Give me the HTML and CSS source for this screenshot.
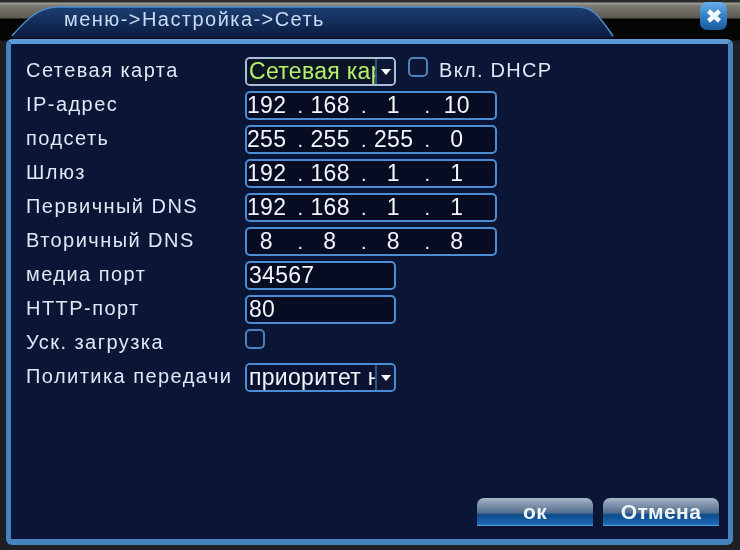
FILE: index.html
```html
<!DOCTYPE html>
<html lang="ru">
<head>
<meta charset="utf-8">
<title>Сеть</title>
<link rel="stylesheet" href="styles.css">
</head>
<body>
<div class="window">
  <header class="titlebar">
    <svg class="tab" width="740" height="40" viewBox="0 0 740 40" aria-hidden="true">
      <defs>
        <linearGradient id="tabfill" x1="0" y1="0" x2="0" y2="1">
          <stop offset="0" stop-color="#1c3f74"/>
          <stop offset="1" stop-color="#0a1a3e"/>
        </linearGradient>
      </defs>
      <path d="M12 38 C26 20 38 7 58 7 L578 7 C592 7 598 14 613 36 L613 38 Z" fill="url(#tabfill)"/>
      <path d="M12 36 C26 20 38 7 58 7 L578 7 C592 7 598 14 613 36" fill="none" stroke="#4f8fcc" stroke-width="1.5"/>
    </svg>
    <h1 class="title">меню-&gt;Настройка-&gt;Сеть</h1>
    <button class="close" type="button" aria-label="Закрыть">
      <svg width="20" height="20" viewBox="0 0 20 20" aria-hidden="true"><path d="M4.5 5 L15.5 15 M15.5 5 L4.5 15" stroke="#f4f8fc" stroke-width="4.5"/></svg>
    </button>
  </header>
  <main class="panel">
    <div class="form">
      <div class="row">
        <span class="label">Сетевая карта</span>
        <div class="field short select selected"><span class="value green">Сетевая карта</span><span class="arrow"></span></div>
        <span class="checkbox dhcp-box"></span>
        <span class="label dhcp">Вкл. DHCP</span>
      </div>
      <div class="row">
        <span class="label">IP-адрес</span>
        <div class="field ip"><span class="oct">192</span><span class="dot">.</span><span class="oct">168</span><span class="dot">.</span><span class="oct">1</span><span class="dot">.</span><span class="oct">10</span></div>
      </div>
      <div class="row">
        <span class="label">подсеть</span>
        <div class="field ip"><span class="oct">255</span><span class="dot">.</span><span class="oct">255</span><span class="dot">.</span><span class="oct">255</span><span class="dot">.</span><span class="oct">0</span></div>
      </div>
      <div class="row">
        <span class="label">Шлюз</span>
        <div class="field ip"><span class="oct">192</span><span class="dot">.</span><span class="oct">168</span><span class="dot">.</span><span class="oct">1</span><span class="dot">.</span><span class="oct">1</span></div>
      </div>
      <div class="row">
        <span class="label">Первичный DNS</span>
        <div class="field ip"><span class="oct">192</span><span class="dot">.</span><span class="oct">168</span><span class="dot">.</span><span class="oct">1</span><span class="dot">.</span><span class="oct">1</span></div>
      </div>
      <div class="row">
        <span class="label">Вторичный DNS</span>
        <div class="field ip"><span class="oct">8</span><span class="dot">.</span><span class="oct">8</span><span class="dot">.</span><span class="oct">8</span><span class="dot">.</span><span class="oct">8</span></div>
      </div>
      <div class="row">
        <span class="label">медиа порт</span>
        <div class="field short"><span class="value">34567</span></div>
      </div>
      <div class="row">
        <span class="label">HTTP-порт</span>
        <div class="field short"><span class="value">80</span></div>
      </div>
      <div class="row">
        <span class="label">Уск. загрузка</span>
        <span class="checkbox"></span>
      </div>
      <div class="row">
        <span class="label">Политика передачи</span>
        <div class="field short select"><span class="value">приоритет на качество</span><span class="arrow"></span></div>
      </div>
    </div>
    <footer class="actions">
      <button class="btn ok" type="button">ок</button>
      <button class="btn" type="button">Отмена</button>
    </footer>
  </main>
</div>
</body>
</html>
```

FILE: styles.css
```css
* { box-sizing: border-box; }
html, body { margin: 0; height: 100%; }
body { background: #16181c; overflow: hidden; font-family: "Liberation Sans", Arial, sans-serif; }

.window {
  width: 740px;
  height: 550px;
  display: flex;
  flex-direction: column;
  padding: 0 7px 5px 6px;
  background: linear-gradient(#2b2b2a 0, #2b2b2a 2px, #a09f98 3px, #7a7870 6px, #5c5950 18px, #050505 19px, #050505 40px, #1d1f24 41px);
  filter: blur(0.4px);
}

.titlebar {
  position: relative;
  height: 39px;
  flex: none;
  display: flex;
  align-items: flex-start;
  justify-content: space-between;
  padding-left: 58px;
}
.tab { position: absolute; left: -6px; top: 0; }
.title {
  position: relative;
  margin: 8px 0 0;
  font-size: 20px;
  line-height: 22px;
  font-weight: normal;
  letter-spacing: 1.45px;
  color: #c9dcf3;
}
.close {
  position: relative;
  width: 27px;
  height: 28px;
  margin: 2px 6px 0 0;
  padding: 0;
  border: 0;
  border-radius: 7px;
  display: flex;
  align-items: center;
  justify-content: center;
  background: linear-gradient(#6ab0ea, #2a78c0 60%, #1d5b9c);
}

.panel {
  flex: 1;
  display: flex;
  flex-direction: column;
  padding: 13px 9px 13px 15px;
  border: 5px solid #4583bf;
  border-top-color: #5b9ad6;
  border-bottom-width: 6px;
  border-radius: 6px;
  background: #0b1536;
}

.form { display: flex; flex-direction: column; gap: 5px; }
.row {
  display: flex;
  align-items: flex-start;
  height: 29px;
  color: #dfe8f5;
}
.label {
  width: 219px;
  flex: none;
  font-size: 20px;
  line-height: 26px;
  letter-spacing: 1.45px;
  white-space: nowrap;
}
.field {
  height: 29px;
  display: flex;
  align-items: center;
  border: 2px solid #4a8dd2;
  border-radius: 5px;
  background: #070c22;
  color: #f2f5fa;
  font-size: 23px;
  overflow: hidden;
  white-space: nowrap;
}
.short { width: 151px; }
.value { padding-left: 2px; flex: 1; min-width: 0; overflow: hidden; letter-spacing: 0.3px; }
.ip { width: 252px; }
.oct { width: 38.5px; text-align: center; flex: none; letter-spacing: 0.3px; }
.dot { width: 25px; padding: 2px 0 0 12px; flex: none; font-size: 20px; }

.select { padding: 0; }
.select .value { background: #0b1130; }
.arrow {
  width: 19px;
  height: 100%;
  flex: none;
  display: flex;
  align-items: center;
  justify-content: center;
  border-left: 2px solid #33547f;
  background: #0f1736;
}
.arrow::after {
  content: "";
  border-left: 5px solid transparent;
  border-right: 5px solid transparent;
  border-top: 6px solid #fff;
}
.selected { border-color: #a9bfd8; }
.selected .value { background: #0b1526; }
.green { color: #b6f06a; }

.checkbox {
  width: 20px;
  height: 20px;
  flex: none;
  border: 2px solid #4f82b8;
  border-radius: 5px;
  background: #0b1536;
}
.dhcp-box { margin-left: 12px; }
.dhcp { width: auto; margin-left: 11px; letter-spacing: 1.3px; }

.actions {
  margin-top: auto;
  display: flex;
  justify-content: flex-end;
  gap: 10px;
}
.btn {
  width: 116px;
  height: 28px;
  padding: 0 0 1px;
  border: 0;
  border-radius: 7px 7px 0 0;
  font-family: "Liberation Sans", Arial, sans-serif;
  font-size: 21px;
  font-weight: bold;
  letter-spacing: 0.4px;
  color: #eef3f8;
  background: linear-gradient(#a9b7c8 0, #7f92ab 25%, #51708f 52%, #0f4a8a 60%, #1a68b4 94%, #6aaee6 100%);
}
```
